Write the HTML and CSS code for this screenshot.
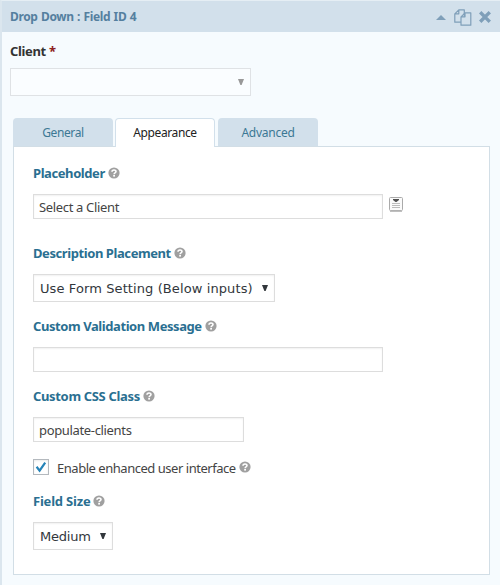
FILE: index.html
```
<!DOCTYPE html>
<html lang="en">
<head>
<meta charset="utf-8">
<title>Drop Down field settings</title>
<link rel="stylesheet" href="styles.css">
</head>
<body>
<svg class="defs" width="0" height="0" aria-hidden="true">
  <symbol id="help" viewBox="0 0 12 12">
    <circle cx="6" cy="6" r="5.6" fill="#a0a0a0"/>
    <path d="M4 4.7C4 2.5 8 2.4 8 4.6 8 6 6.1 5.8 6.1 7.2" fill="none" stroke="#fff" stroke-width="1.6"/>
    <rect x="5.2" y="8" width="1.8" height="1.6" fill="#fff"/>
  </symbol>
  <symbol id="arrow" viewBox="0 0 6 6"><path d="M0 0H6L3.6 6H2.4Z" fill="currentColor"/></symbol>
</svg>
<main class="field">
  <header class="bar">
    <span class="title">Drop Down : Field ID 4</span>
    <span class="actions">
      <svg class="up" width="10" height="5" viewBox="0 0 10 5"><path d="M0 5 5 0 10 5Z" fill="#7f9fb9"/></svg>
      <svg class="copy" width="18" height="17" viewBox="0 0 18 17" fill="#d2e0eb" stroke="#7f9fb9" stroke-width="1.2" stroke-linejoin="round"><path d="M.8 4.8 4.8.8H10.3V13.2H.8ZM.8 4.8H4.8V.8"/><path d="M7 7.8 11 3.8H16.8V16.2H7ZM7 7.8H11V3.8"/></svg>
      <svg class="close" width="12" height="12" viewBox="0 0 12 12"><path d="M2.4 2.4 9.6 9.6M9.6 2.4 2.4 9.6" stroke="#7f9fb9" stroke-width="3.4" stroke-linecap="square"/></svg>
    </span>
  </header>
  <div class="preview">
    <div class="client">Client <span class="required">*</span></div>
    <div class="preview-select"><svg class="arrow"><use href="#arrow"/></svg></div>
  </div>
  <nav class="tabs">
    <span class="tab general">General</span>
    <span class="tab active">Appearance</span>
    <span class="tab advanced">Advanced</span>
  </nav>
  <section class="panel">
    <div class="setting placeholder">
      <div class="label"><span>Placeholder</span><svg class="help"><use href="#help"/></svg></div>
      <div class="row">
        <div class="input">Select a Client</div>
        <svg class="merge" width="14" height="15" viewBox="0 0 14 15"><rect x=".5" y=".5" width="13" height="13" rx="1" fill="#fafafa" stroke="#aaa"/><path d="M1 14.2H13" stroke="#b8b8b8" stroke-width="1.4"/><path d="M3 6.5H11M3 8.5H11M3 10.5H11" stroke="#bbb"/><path d="M4 2H10V3L7.5 5H6.5L4 3Z" fill="#505050"/></svg>
      </div>
    </div>
    <div class="setting description">
      <div class="label"><span>Description Placement</span><svg class="help"><use href="#help"/></svg></div>
      <div class="select wide"><span>Use Form Setting (Below inputs)</span><svg class="arrow"><use href="#arrow"/></svg></div>
    </div>
    <div class="setting validation">
      <div class="label"><span>Custom Validation Message</span><svg class="help"><use href="#help"/></svg></div>
      <div class="input"></div>
    </div>
    <div class="setting css-class">
      <div class="label css-label"><span>Custom CSS Class</span><svg class="help"><use href="#help"/></svg></div>
      <div class="input short">populate-clients</div>
    </div>
    <div class="check-row">
      <span class="checkbox"><svg width="12" height="12" viewBox="0 0 12 12"><path d="M1.6 5.8 4.6 9.6 10.2 1.6" fill="none" stroke="#2583b8" stroke-width="2.2"/></svg></span>
      <span class="check-text">Enable enhanced user interface</span><svg class="help"><use href="#help"/></svg>
    </div>
    <div class="setting size">
      <div class="label size-label"><span>Field Size</span><svg class="help"><use href="#help"/></svg></div>
      <div class="select medium"><span>Medium</span><svg class="arrow"><use href="#arrow"/></svg></div>
    </div>
  </section>
</main>
</body>
</html>
```
FILE: styles.css
```
* { box-sizing: border-box; }
html, body { margin: 0; height: 585px; overflow: hidden; }
body { background: #f6fbfe; font: 13px/18px "Noto Sans", "Open Sans", sans-serif; color: #444; white-space: nowrap; }
svg { display: block; flex: none; }
.defs { position: absolute; }
.field { height: 585px; border-left: 2px solid #dbe6ee; border-top: 1px solid #e5eef4; background: #f6fbfe; }
.bar { height: 31px; background: #d2e0eb; display: flex; align-items: center; padding: 1px 9px 0 8px; }
.title { font-weight: 700; font-size: 12px; color: #557f9f; letter-spacing: -.35px; word-spacing: .6px; padding-bottom: 1px; }
.actions { margin-left: auto; display: flex; align-items: center; }
.copy { margin-left: 8px; }
.close { margin-left: 7px; }
.preview { padding: 10px 0 0 8px; height: 86px; }
.client { font-weight: 700; color: #333; height: 26px; letter-spacing: -.35px; }
.required { color: #8d2020; }
.preview-select { width: 241px; height: 28px; border: 1px solid #dfe2e5; background: #fafdff; display: flex; align-items: center; justify-content: flex-end; padding-right: 6px; color: #999; }
.arrow { width: 6px; height: 6px; }
.tabs { display: flex; height: 29px; padding-left: 11px; margin-bottom: -1px; position: relative; }
.tab { width: 100px; height: 28px; border-radius: 4px 4px 0 0; background: #d2e0eb; color: #3c7894; font-size: 12px; line-height: 29px; text-align: center; letter-spacing: -.4px; }
.advanced { letter-spacing: -.25px; }
.active { height: 29px; background: #fff; border: 1px solid #d2e0eb; border-bottom: 0; color: #222; margin: 0 3px 0 2px; line-height: 27px; }
.panel { width: 477px; height: 429px; margin-left: 11px; border: 1px solid #d2dee6; background: #fff; padding: 17px 19px 0; }
.setting { display: flex; flex-direction: column; align-items: flex-start; }
.label { height: 18px; display: flex; align-items: center; font-weight: 700; color: #2a6f91; letter-spacing: -.42px; margin-bottom: 12px; }
.css-label { letter-spacing: -.34px; }
.size-label { letter-spacing: -.2px; }
.help { width: 12px; height: 12px; margin-left: 3px; }
.row { display: flex; align-items: flex-start; }
.input { width: 350px; height: 25px; border: 1px solid #ddd; box-shadow: inset 0 1px 2px rgba(0,0,0,.06); background: #fff; padding: 1px 5px 0; line-height: 22px; letter-spacing: -.34px; }
.short { width: 211px; }
.merge { margin: 3px 0 0 6px; }
.select { height: 28px; border: 1px solid #ddd; box-shadow: inset 0 1px 2px rgba(0,0,0,.06); display: flex; align-items: center; justify-content: space-between; font: 13px/26px "DejaVu Sans", sans-serif; color: #32373c; padding: 0 6px; }
.select span { padding-top: 1px; line-height: 25px; }
.wide { width: 242px; letter-spacing: .1px; }
.medium { width: 80px; letter-spacing: -.2px; }
.placeholder { height: 80px; }
.description { height: 73px; }
.validation { height: 70px; }
.css-class { height: 71px; }
.check-row { display: flex; align-items: center; height: 18px; margin-bottom: 16px; }
.check-text { letter-spacing: -.47px; padding-top: 1px; }
.checkbox { width: 16px; height: 16px; border: 1px solid #b4b9be; box-shadow: inset 0 1px 2px rgba(0,0,0,.08); display: flex; align-items: center; justify-content: center; margin-right: 8px; }
```
